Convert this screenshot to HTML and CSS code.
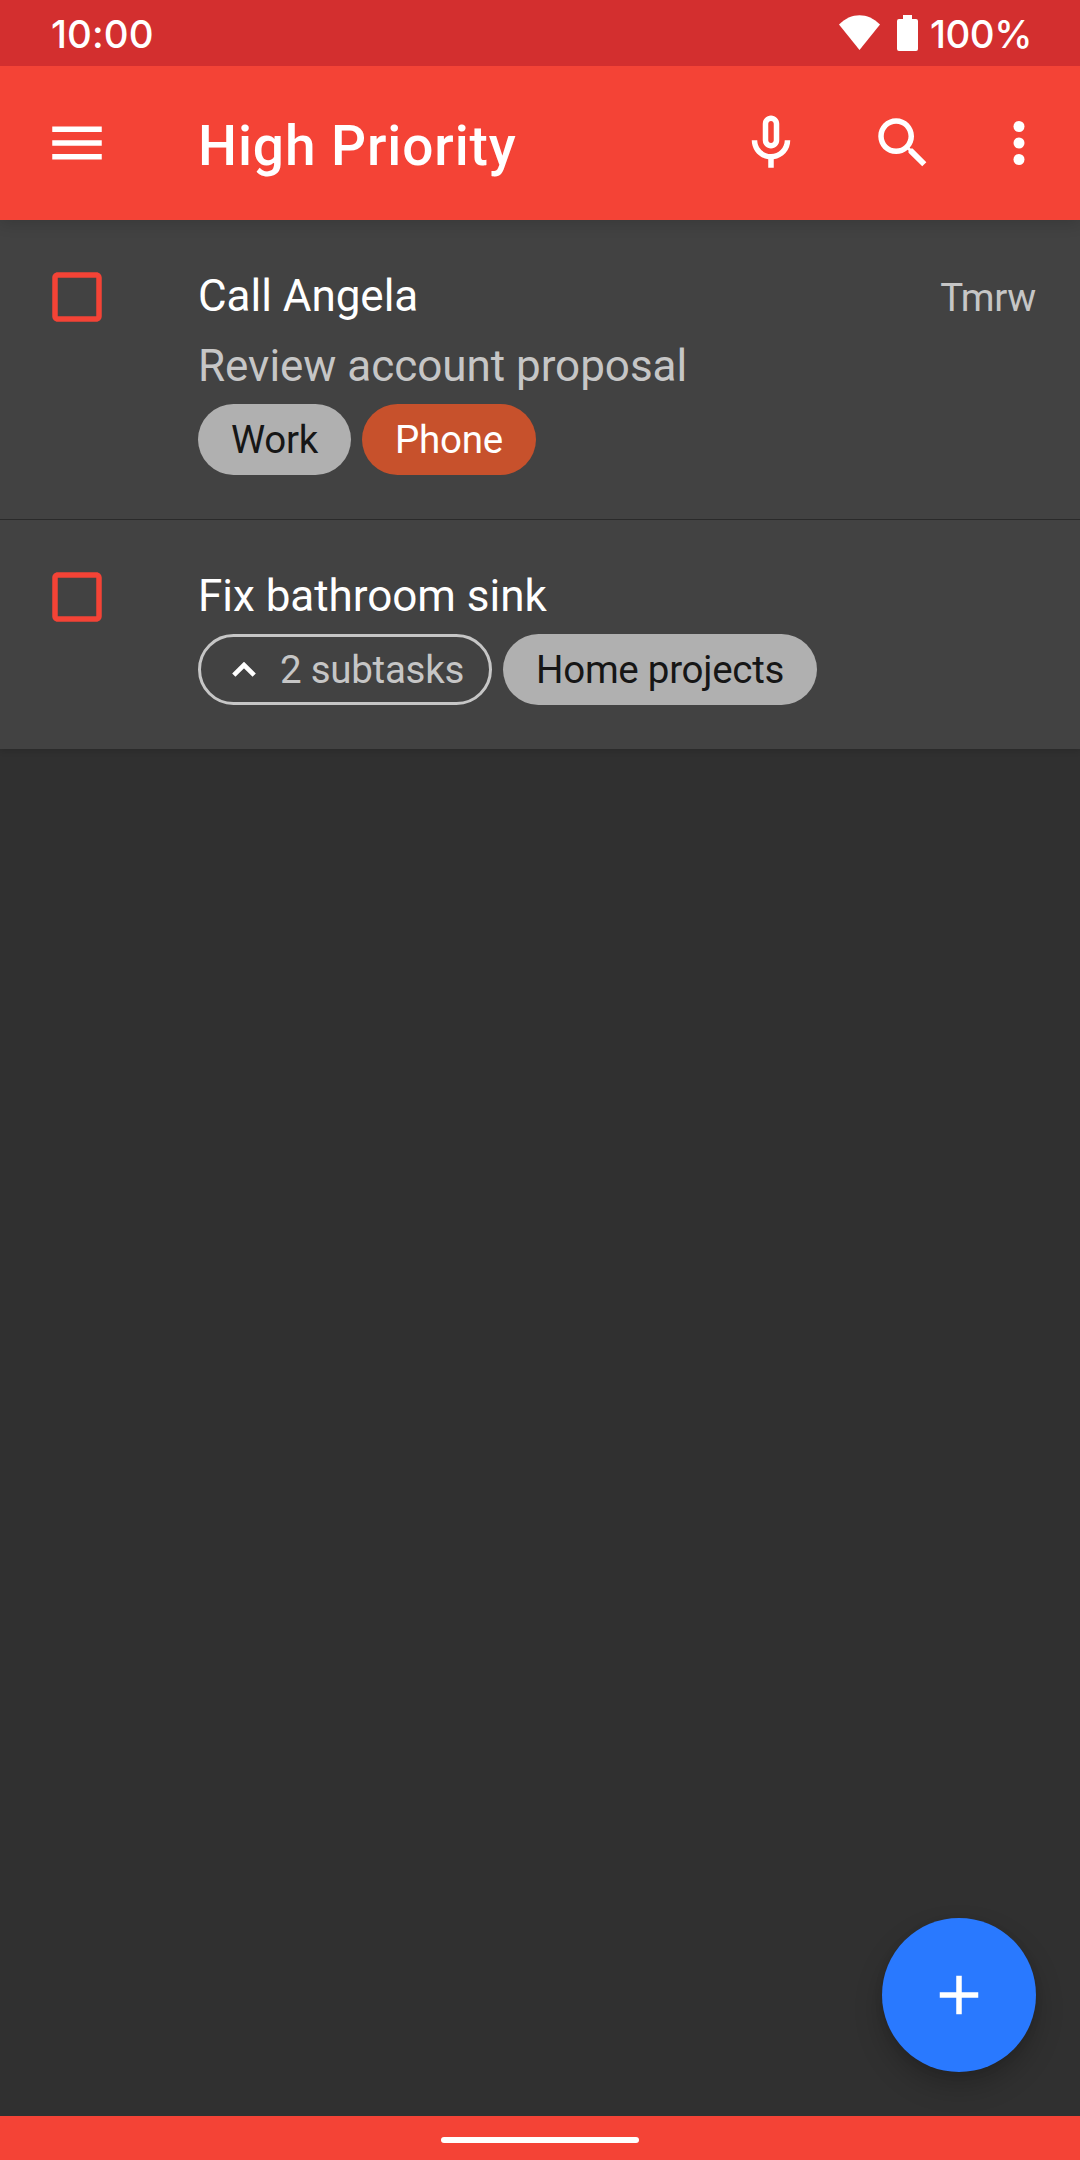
FILE: index.html
```html
<!DOCTYPE html>
<html lang="en">
<head>
<meta charset="utf-8">
<title>High Priority</title>
<link rel="stylesheet" href="styles.css">
</head>
<body>
<div class="screen">
  <div class="statusbar">
    <span class="clock">10:00</span>
    <svg class="wifi" viewBox="0 0 41 35"><path d="M0 9.5C12-3 29-3 41 9.5L20.500 35z"/></svg>
    <svg class="battery" viewBox="0 0 21 36"><path d="M6 0h9v4h4a2 2 0 0 1 2 2v28a2 2 0 0 1-2 2H2a2 2 0 0 1-2-2V6a2 2 0 0 1 2-2h4z"/></svg>
    <span class="percent">100%</span>
  </div>
  <header class="toolbar">
    <svg class="icon" viewBox="0 0 24 24"><path d="M3 18h18v-2H3v2zm0-5h18v-2H3v2zm0-7v2h18V6H3z"/></svg>
    <h1 class="title">High Priority</h1>
    <svg class="icon mic" viewBox="0 0 24 24"><path d="M12 14c1.660 0 3-1.340 3-3V5c0-1.660-1.340-3-3-3S9 3.340 9 5v6c0 1.660 1.340 3 3 3zm-1-9c0-.55.45-1 1-1s1 .45 1 1v6c0 .55-.45 1-1 1s-1-.45-1-1V5zm6 6c0 2.760-2.240 5-5 5s-5-2.240-5-5H5c0 3.530 2.610 6.430 6 6.920V21h2v-3.080c3.390-.49 6-3.390 6-6.920h-2z"/></svg>
    <svg class="icon search" viewBox="0 0 24 24"><path d="M15.500 14h-.79l-.28-.27C15.410 12.590 16 11.110 16 9.500 16 5.910 13.090 3 9.500 3S3 5.910 3 9.500 5.910 16 9.500 16c1.610 0 3.090-.59 4.230-1.570l.27.28v.79l5 4.990L20.490 19l-4.990-5zm-6 0C7.010 14 5 11.990 5 9.500S7.010 5 9.500 5 14 7.010 14 9.500 11.990 14 9.500 14z"/></svg>
    <svg class="icon more" viewBox="0 0 24 24"><circle cx="12" cy="6" r="2"/><circle cx="12" cy="12" r="2"/><circle cx="12" cy="18" r="2"/></svg>
  </header>
  <main class="content">
    <ul class="tasks">
      <li class="task divided">
        <svg class="check" viewBox="0 0 24 24"><path d="M19 5v14H5V5h14m0-2H5c-1.100 0-2 .9-2 2v14c0 1.100.9 2 2 2h14c1.100 0 2-.9 2-2V5c0-1.100-.9-2-2-2z"/></svg>
        <div class="body">
          <div class="name">Call Angela</div>
          <div class="notes">Review account proposal</div>
          <div class="chips"><span class="chip">Work</span><span class="chip orange">Phone</span></div>
        </div>
        <span class="due">Tmrw</span>
      </li>
      <li class="task">
        <svg class="check" viewBox="0 0 24 24"><path d="M19 5v14H5V5h14m0-2H5c-1.100 0-2 .9-2 2v14c0 1.100.9 2 2 2h14c1.100 0 2-.9 2-2V5c0-1.100-.9-2-2-2z"/></svg>
        <div class="body">
          <div class="name">Fix bathroom sink</div>
          <div class="chips"><span class="chip outline"><svg class="chevron" viewBox="0 0 24 15"><path d="M1.800 13.200 12 3l10.200 10.200"/></svg>2 subtasks</span><span class="chip">Home projects</span></div>
        </div>
      </li>
    </ul>
    <button class="fab" aria-label="Add task"><svg class="icon" viewBox="0 0 24 24"><path d="M19 13h-6v6h-2v-6H5v-2h6V5h2v6h6v2z"/></svg></button>
  </main>
  <div class="navbar"><div class="handle"></div></div>
</div>
</body>
</html>
```
FILE: styles.css
```css
* { box-sizing: border-box; }
body { margin: 0; background: #303030; font-family: Roboto, "Liberation Sans", sans-serif; }
svg { display: block; flex: none; fill: #fff; }
.screen { display: flex; flex-direction: column; width: 1080px; height: 2160px; color: #fff; }

.statusbar { position: relative; z-index: 2; display: flex; height: 66px; padding: 1px 51px 0; background: #d32f2f; font-family: Inter, Roboto, sans-serif; font-size: 38.5px; font-weight: 500; line-height: 66px; white-space: nowrap; }
.clock { flex: 1; letter-spacing: 0.1px; }
.wifi { width: 41px; height: 35px; margin: 14px 17px 0 0; }
.battery { width: 21px; height: 36px; margin: 14px 12px 0 0; }
.percent { width: 99px; letter-spacing: -.5px; }

.toolbar { position: relative; z-index: 1; display: flex; align-items: center; height: 154px; padding: 0 28px 0 44px; background: #f44336; box-shadow: 0 4px 14px rgba(0, 0, 0, .14); }
.icon { width: 66px; height: 66px; }
.title { flex: 1; margin: 0; padding: 6px 0 0 88px; font-size: 55px; font-weight: 500; line-height: 70px; letter-spacing: .9px; white-space: nowrap; }
.search { margin: 0 50px 0 66px; }

.content { position: relative; flex: 1; }
.tasks { margin: 0; padding: 0; list-style: none; background: #424242; box-shadow: 0 2px 6px rgba(0, 0, 0, .14); }
.task { display: flex; align-items: flex-start; padding: 41px 44px 44px; white-space: nowrap; }
.divided { border-bottom: 1px solid #2a2a2a; }
.check { width: 66px; height: 66px; margin: 3px 88px 0 0; fill: #f44336; }
.body { flex: 1; }
.name, .notes { font-size: 44px; line-height: 70px; letter-spacing: -.03px; }
.notes, .due { color: #c6c6c6; }
.due { margin-top: 2px; font-size: 38.5px; line-height: 70px; letter-spacing: -.3px; }
.chips { display: flex; gap: 11px; margin-top: 3px; }
.chip { display: flex; align-items: center; height: 71px; padding: 0 33px; border-radius: 36px; background: #b0b0b0; color: #161616; font-size: 38.5px; letter-spacing: -.27px; }
.orange { background: #c7512c; color: #fff; }
.outline { padding: 0 25px 0 31px; border: 3px solid #c6c6c6; background: none; color: #c6c6c6; }
.chevron { width: 24px; height: 15px; margin-right: 24px; fill: none; stroke: #fff; stroke-width: 4.6; }

.fab { position: absolute; right: 44px; bottom: 44px; display: flex; align-items: center; justify-content: center; width: 154px; height: 154px; padding: 0; border: 0; border-radius: 50%; background: #2979ff; box-shadow: 0 14px 28px rgba(0, 0, 0, .22), 0 2px 8px rgba(0, 0, 0, .08); }
.navbar { position: relative; display: flex; align-items: flex-start; justify-content: center; height: 44px; padding-top: 21px; background: #f44336; }
.handle { width: 198px; height: 6px; border-radius: 3px; background: #fff; }
```
